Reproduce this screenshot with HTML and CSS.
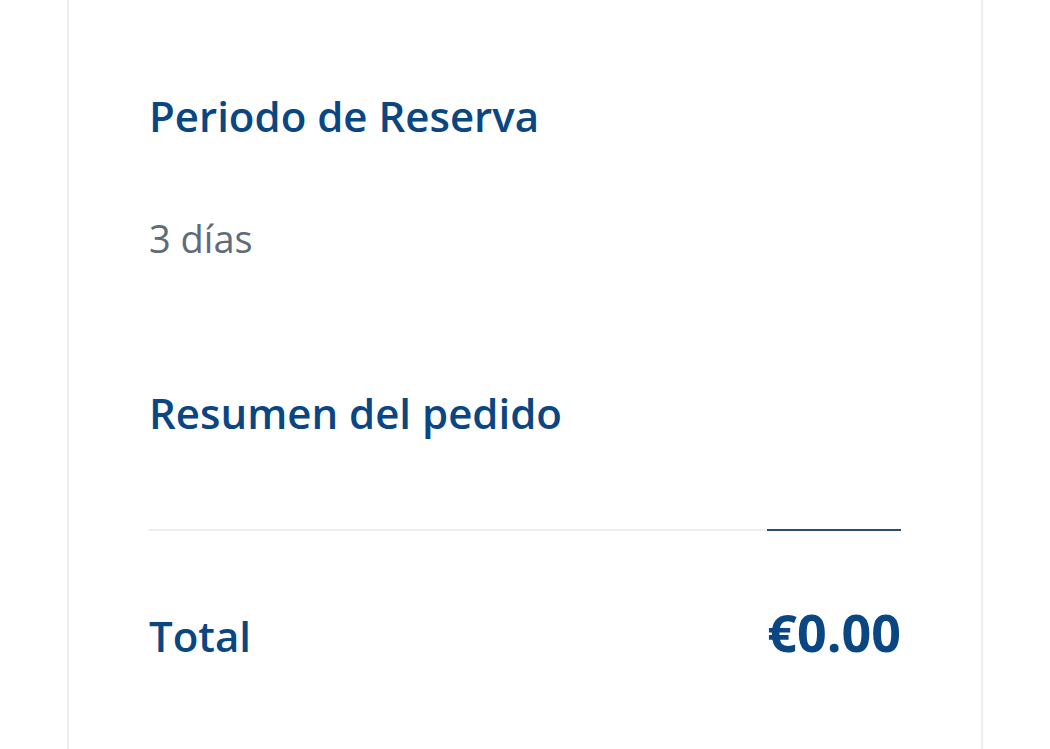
FILE: index.html
```html
<!DOCTYPE html>
<html lang="es">
<head>
<meta charset="utf-8">
<title>Resumen</title>
<link rel="stylesheet" href="styles.css">
</head>
<body>
<main class="card">
  <section class="block">
    <h2 class="title">Periodo de Reserva</h2>
    <p class="period">3 días</p>
  </section>
  <section class="block summary">
    <h2 class="title">Resumen del pedido</h2>
    <div class="rule"><span class="rule-accent"></span></div>
    <div class="total-row">
      <span class="total-label">Total</span>
      <span class="total-value">€0.00</span>
    </div>
  </section>
</main>
</body>
</html>
```
FILE: styles.css
```css
html, body {
  margin: 0;
  padding: 0;
  background: #ffffff;
}
body {
  font-family: "Open Sans", "Noto Sans", sans-serif;
  height: 749px;
  overflow: hidden;
}
.card {
  margin: 0 67px;
  height: 749px;
  box-sizing: border-box;
  border-left: 2px solid #ededed;
  border-right: 2px solid #ededed;
  padding: 86px 80px 0 80px;
}
.title {
  margin: 0;
  font-size: 42px;
  font-weight: 600;
  color: #0a4682;
  line-height: 60px;
}
.period {
  margin: 72px 0 0 0;
  font-size: 38px;
  color: #5e6b79;
  line-height: 40px;
}
.summary {
  margin-top: 125px;
}
.rule {
  margin-top: 86px;
  height: 2px;
  background: #eeeeee;
  display: flex;
  justify-content: flex-end;
}
.rule-accent {
  width: 134px;
  height: 2px;
  background: #2b4d73;
}
.total-row {
  display: flex;
  justify-content: space-between;
  align-items: baseline;
  margin-top: 73px;
  line-height: 56px;
}
.total-label {
  font-size: 42px;
  font-weight: 600;
  color: #0a4682;
}
.total-value {
  font-size: 52px;
  font-weight: 700;
  color: #0a4682;
}
```
